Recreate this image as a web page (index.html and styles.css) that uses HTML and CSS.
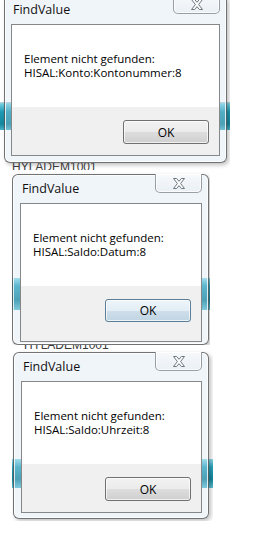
FILE: index.html
```html
<!DOCTYPE html>
<html lang="de">

<head>
    <meta charset="UTF-8">
    <meta name="viewport" content="width=device-width, initial-scale=1.0">
    <title>FindValue</title>
    <link rel="stylesheet" href="styles.css">
</head>

<body>
    <!-- first capture: the top of the window is cut off -->
    <div class="shot shot-one">
        <div class="window window-wide">
            <div class="titlebar">
                <span class="title">FindValue</span>
                <span class="close">
                    <svg width="12" height="11" viewBox="0 0 12 11">
                        <polygon points="0.5,0.5 3.6,0.5 6,3.3 8.4,0.5 11.5,0.5 7.6,5.5 11.5,10.5 8.4,10.5 6,7.7 3.6,10.5 0.5,10.5 4.4,5.5" />
                    </svg>
                </span>
            </div>
            <div class="client">
                <div class="message">
                    <p>Element nicht gefunden:</p>
                    <p>HISAL:Konto:Kontonummer:8</p>
                </div>
                <div class="buttons">
                    <button class="ok">OK</button>
                </div>
            </div>
        </div>
        <div class="behind behind-below"><span>HYLADEM1001</span></div>
    </div>

    <div class="shot shot-two">
        <div class="window">
            <div class="titlebar">
                <span class="title">FindValue</span>
                <span class="close">
                    <svg width="12" height="11" viewBox="0 0 12 11">
                        <polygon points="0.5,0.5 3.6,0.5 6,3.3 8.4,0.5 11.5,0.5 7.6,5.5 11.5,10.5 8.4,10.5 6,7.7 3.6,10.5 0.5,10.5 4.4,5.5" />
                    </svg>
                </span>
            </div>
            <div class="client">
                <div class="message">
                    <p>Element nicht gefunden:</p>
                    <p>HISAL:Saldo:Datum:8</p>
                </div>
                <div class="buttons buttons-tall">
                    <button class="ok ok-focus">OK</button>
                </div>
            </div>
        </div>
    </div>

    <div class="shot shot-three">
        <div class="behind behind-above"><span>HYLADEM1001</span></div>
        <div class="window">
            <div class="titlebar">
                <span class="title">FindValue</span>
                <span class="close">
                    <svg width="12" height="11" viewBox="0 0 12 11">
                        <polygon points="0.5,0.5 3.6,0.5 6,3.3 8.4,0.5 11.5,0.5 7.6,5.5 11.5,10.5 8.4,10.5 6,7.7 3.6,10.5 0.5,10.5 4.4,5.5" />
                    </svg>
                </span>
            </div>
            <div class="client">
                <div class="message">
                    <p>Element nicht gefunden:</p>
                    <p>HISAL:Saldo:Uhrzeit:8</p>
                </div>
                <div class="buttons">
                    <button class="ok">OK</button>
                </div>
            </div>
        </div>
    </div>
</body>

</html>
```

FILE: styles.css
```css
* {
    margin: 0;
    padding: 0;
    box-sizing: border-box;
}

body {
    background: #fff;
    font-family: "Open Sans", "Noto Sans", sans-serif;
    font-size: 11.5px;
    color: #000;
}

/* one cropped screen capture each */
.shot {
    overflow: hidden;
}

.shot-one {
    width: 230px;
    height: 172px;
    background: linear-gradient(to bottom, #fff 102px, #c9d4d8 102px, #6fcfe2 104px, #1d9ab4 112px, #15879f 124px, #4cb3c9 130px, #fff 130px);
}

.shot-two {
    width: 198px;
    height: 173px;
    margin-left: 12px;
    padding-top: 2px;
    background: linear-gradient(to bottom, #fff 106px, #8fdcec 106px, #2aa6bf 114px, #15879f 128px, #5fc2d6 138px, #fff 138px);
}

.shot-three {
    width: 201px;
    height: 176px;
    margin-left: 12px;
    padding-left: 1px;
    background: linear-gradient(to bottom, #fff 114px, #8fdcec 114px, #2aa6bf 122px, #15879f 134px, #5fc2d6 143px, #fff 143px);
}

/* window frame */
.window {
    width: 196px;
    border: 1px solid rgba(70, 70, 70, 0.75);
    border-radius: 6px;
    padding: 0 6px 5px 7px;
    background: rgba(205, 222, 238, 0.3);
    box-shadow: inset 0 0 0 1px rgba(255, 255, 255, 0.8), 2px 2px 4px rgba(0, 0, 0, 0.25);
}

.window-wide {
    width: 223px;
    margin: -5px 0 0 4px;
    padding: 0 6px 6px 6px;
}

.shot-two .window {
    width: 197px;
    padding-bottom: 2px;
}

.titlebar {
    height: 28px;
    display: flex;
    justify-content: space-between;
    align-items: flex-start;
}

.title {
    padding: 6px 0 0 2px;
    font-size: 12.5px;
    line-height: 16px;
    color: #111;
}

.close {
    width: 47px;
    height: 19px;
    margin-top: -1px;
    display: flex;
    align-items: center;
    justify-content: center;
    border: 1px solid rgba(90, 100, 110, 0.6);
    border-top: none;
    border-radius: 0 0 5px 5px;
    background: linear-gradient(to bottom, #f7f9fb, #eaf0f5);
    box-shadow: inset 0 0 0 1px rgba(255, 255, 255, 0.8);
}

.close svg polygon {
    fill: #fdfdfd;
    stroke: #6d7780;
    stroke-width: 1;
    stroke-linejoin: round;
}

/* dialog content */
.client {
    border: 1px solid #858788;
    background: #f0f0f0;
}

.message {
    height: 82px;
    background: #fff;
    padding: 27px 0 0 12px;
    line-height: 14px;
}

.buttons {
    height: 48px;
    display: flex;
    justify-content: flex-end;
    align-items: flex-start;
    padding: 13px 10px 0 0;
}

.buttons-tall {
    height: 55px;
}

.ok {
    width: 86px;
    height: 24px;
    font-family: inherit;
    font-size: 12px;
    color: #000;
    border: 1px solid #707070;
    border-radius: 3px;
    background: linear-gradient(to bottom, #f2f2f2 0%, #ebebeb 50%, #dddddd 51%, #cfcfcf 100%);
    box-shadow: inset 0 0 0 1px rgba(255, 255, 255, 0.7);
}

.ok-focus {
    height: 23px;
    border-color: #5c7f99;
    background: linear-gradient(to bottom, #eef5fa 0%, #e2edf5 50%, #cfdfeb 51%, #c0d4e3 100%);
}

/* bits of the window behind */
.behind {
    height: 7px;
    overflow: hidden;
    padding-left: 12px;
    font-family: "Liberation Sans", sans-serif;
    font-size: 12px;
    color: #3a3a3a;
}

.behind-below span {
    display: block;
    line-height: 12px;
    margin-top: -2px;
}

.behind-above {
    display: flex;
    align-items: flex-end;
    padding-left: 11px;
}

.behind-above span {
    line-height: 12px;
    margin-bottom: 1px;
}
```
